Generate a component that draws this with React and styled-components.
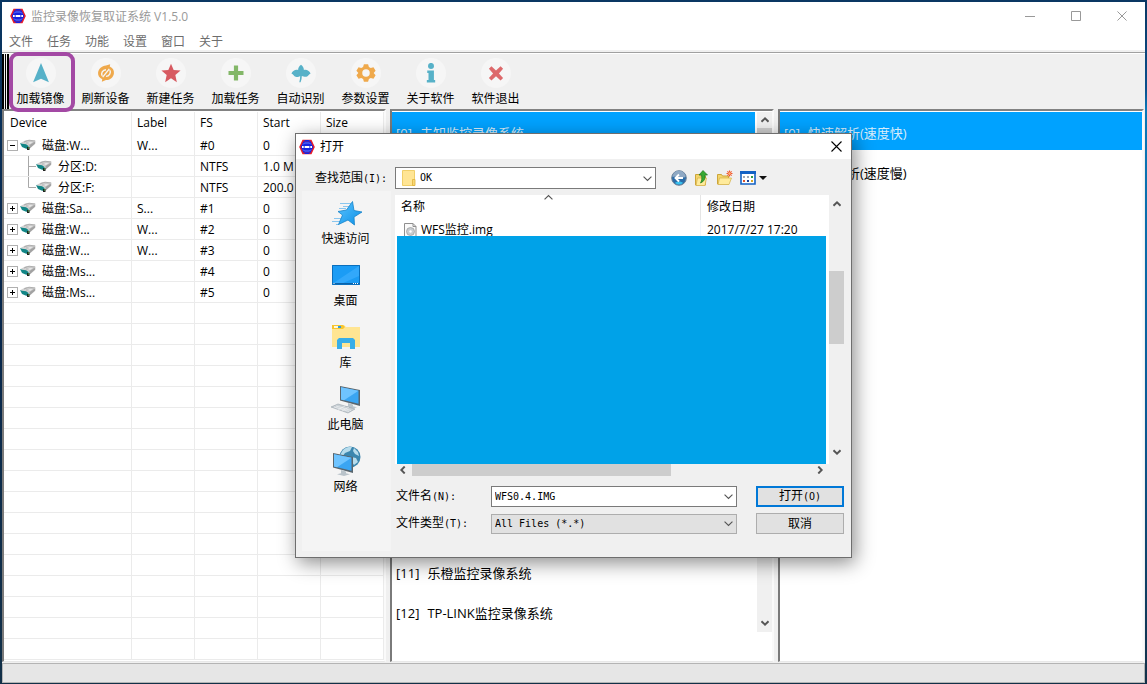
import React from "react";
import styled, { createGlobalStyle } from "styled-components";

const Global = createGlobalStyle`
  *, *::before, *::after { box-sizing: border-box; }
  body {
    margin: 0;
    font-family: "Open Sans", "Noto Sans CJK SC", sans-serif;
    font-size: 12px;
    line-height: 16px;
    color: #000;
  }
  button, input, select { font: inherit; color: inherit; margin: 0; padding: 0; border-radius: 0; }
  ul { list-style: none; margin: 0; padding: 0; }
`;

const Desktop = styled.div`
  min-height: 100vh;
  display: flex;
  padding: 2px 2px 1px;
  position: relative;
  background:
    linear-gradient(#0a3763, #0a4f8c 13%, #0a78b8 16%, #0a5a96 60%, #123048) right / 2px 100% no-repeat,
    linear-gradient(#0a3763, #06264c 40%, #123048);
`;

const Frame = styled.div`
  flex: 1;
  min-width: 0;
  display: flex;
  flex-direction: column;
  background: #f0f0f0;
`;

const TitleBar = styled.header`
  display: flex;
  align-items: center;
  height: 28px;
  padding-left: 8px;
  gap: 5px;
  background: #fff;
  color: #999;
`;

const WindowTitle = styled.h1`
  flex: 1;
  margin: 0;
  padding-top: 2px;
  font-size: 12px;
  font-weight: 400;
`;

const CaptionButtons = styled.div`
  display: flex;
`;

const CaptionButton = styled.button`
  width: 46px;
  height: 28px;
  display: grid;
  place-items: center;
  border: 0;
  background: transparent;
  color: #999;
`;

const MenuBar = styled.nav`
  display: flex;
  gap: 14px;
  height: 23px;
  padding: 4px 7px 0;
  background: #fff;
  border-bottom: 1px solid #a0a0a0;
  box-shadow: inset 0 -2px #f0f0f0;
`;

const MenuItem = styled.button`
  height: 16px;
  border: 0;
  background: transparent;
  color: #6d6d6d;
`;

const ToolBar = styled.div`
  display: flex;
  height: 56px;
  padding-left: 6px;
  border-top: 1px solid #fff;
  background: linear-gradient(90deg, #000 2px, #f0f0f0 2px 3px, #000 3px 4px, #f0f0f0 4px 5px, #000 5px 7px, #f0f0f0 7px);
`;

const Tool = styled.button`
  position: relative;
  width: 65px;
  display: flex;
  flex-direction: column;
  align-items: center;
  padding-top: 4px;
  gap: 3px;
  border: 0;
  background: transparent;
  white-space: nowrap;

  &::after {
    content: "";
    display: ${(p) => (p.$marked ? "block" : "none")};
    position: absolute;
    z-index: 2;
    inset: -2px -2px -3px 1px;
    border: 4px solid #a349a4;
    border-radius: 9px;
  }
`;

const ToolIcon = styled.span`
  width: 30px;
  height: 30px;
  display: grid;
  place-items: center;
  border-radius: 50%;
  background: #f6f6f6;
`;

const Workspace = styled.main`
  flex: 1;
  display: grid;
  grid-template-columns: 384px 384px minmax(0, 1fr);
  gap: 4px;
  padding-right: 1px;
`;

const Panel = styled.section`
  min-width: 0;
  overflow: hidden;
  padding-top: 1px;
  background: #fff;
  border-top: 2px solid #828282;
  border-left: 2px solid #7a7a7a;
  border-right: 2px solid #fafafa;
  border-bottom: 1px solid #e8e8e8;
`;

const StatusBar = styled.footer`
  height: 20px;
  margin-top: 1px;
  background: #e6e6e6;
  border: 1px solid #b4b4b4;
`;

const DeviceTable = styled.table`
  width: 380px;
  table-layout: fixed;
  border-collapse: separate;
  border-spacing: 0;

  th, td {
    padding: 0 0 0 5px;
    text-align: left;
    font-weight: 400;
    white-space: nowrap;
    overflow: hidden;
    border-right: 1px solid #ebebeb;
  }
  th { height: 23px; padding-bottom: 2px; }
  td { height: 21px; padding-top: 1px; border-bottom: 1px solid #ebebeb; }
  th:first-child { padding-left: 6px; }
  td:first-child { padding-left: 3px; padding-top: 0; }
`;

const TreeCell = styled.div`
  display: flex;
  align-items: center;
  height: 20px;
  padding-left: ${(p) => (p.$child ? 21 : 0)}px;
`;

const Expander = styled.button`
  width: 11px;
  height: 11px;
  margin-right: 2px;
  display: grid;
  place-items: center;
  border: 1px solid #b0b0b0;
  background: #fff;
`;

const DeviceName = styled.span`
  padding: 1px 0 0 6px;
`;

const ListRow = styled.div`
  display: flex;
`;

const SystemList = styled.ul`
  flex: 1;
  min-width: 0;
  font-size: 13px;
`;

const SystemItem = styled.li`
  display: flex;
  gap: 8px;
  align-items: center;
  height: 40px;
  padding: 4px 0 0 4px;
  white-space: nowrap;
  border-bottom: 2px solid #fff;
  color: ${(p) => (p.$selected ? "#d8ecfa" : "#000")};
  background: ${(p) => (p.$selected ? "#00a2ff" : "#fff")};
`;

const ListScroll = styled.div`
  width: 15px;
  margin-left: 2px;
  display: flex;
  flex-direction: column;
  align-items: center;
  justify-content: space-between;
  padding: 4px 0 5px;
  background: linear-gradient(#f0f0f0 16px, #cdcdcd 16px 60px, #f0f0f0 60px);
`;

const Dialog = styled.div`
  position: absolute;
  z-index: 5;
  top: 133px;
  left: 0;
  right: 0;
  margin: 0 auto;
  width: 557px;
  border: 1px solid #6e6e6e;
  background: #f0f0f0;
  box-shadow: 3px 5px 18px rgba(0, 0, 0, 0.45);
`;

const DialogTitle = styled.header`
  display: flex;
  align-items: center;
  gap: 5px;
  height: 25px;
  padding-left: 3px;
  background: #fff;
`;

const DialogHeading = styled.h2`
  flex: 1;
  margin: 0;
  font-size: 12px;
  font-weight: 400;
`;

const DialogClose = styled.button`
  width: 30px;
  height: 25px;
  display: grid;
  place-items: center;
  border: 0;
  background: transparent;
`;

const LookIn = styled.div`
  display: flex;
  align-items: center;
  height: 32px;
  padding: 6px 0 0 19px;
`;

const FieldLabel = styled.label`
  width: ${(p) => p.$width}px;
  white-space: nowrap;
`;

const Half = styled.span`
  font-family: "DejaVu Sans Mono", monospace;
  font-size: 10px;
`;

const Combo = styled.div`
  position: relative;
  width: ${(p) => p.$width}px;
  height: ${(p) => p.$height}px;

  select, input {
    display: block;
    width: 100%;
    height: 100%;
    appearance: none;
    outline: 0;
    padding-left: ${(p) => (p.$icon ? 24 : 3)}px;
    border: 1px solid ${(p) => (p.$grey ? "#adadad" : "#7a7a7a")};
    background: ${(p) => (p.$grey ? "#e1e1e1" : "#fff")};
    font-family: "DejaVu Sans Mono", monospace;
    font-size: 10px;
  }
`;

const ComboArrow = styled.span`
  position: absolute;
  right: 4px;
  top: 0;
  bottom: 0;
  display: flex;
  align-items: center;
  pointer-events: none;
`;

const ComboIcon = styled.span`
  position: absolute;
  left: 7px;
  top: 0;
  bottom: 0;
  display: flex;
  align-items: center;
  pointer-events: none;
`;

const NavTools = styled.div`
  display: flex;
  align-items: center;
  gap: 7px;
  padding-left: 15px;
`;

const NavButton = styled.button`
  display: flex;
  align-items: center;
  gap: 3px;
  height: 16px;
  border: 0;
  background: transparent;
`;

const DialogBody = styled.div`
  display: flex;
  padding: 0 7px 6px 6px;
`;

const Places = styled.nav`
  width: 89px;
  display: flex;
  flex-direction: column;
  align-items: center;
  padding-top: 6px;
  background: #f4f4f4;
`;

const Place = styled.button`
  display: flex;
  flex-direction: column;
  align-items: center;
  gap: 2px;
  width: 89px;
  height: 62px;
  padding-right: 2px;
  border: 0;
  background: transparent;
`;

const Browser = styled.div`
  flex: 1;
  min-width: 0;
  padding: 4px 0 17px 4px;
`;

const BrowserRow = styled.div`
  display: flex;
`;

const FilePane = styled.div`
  position: relative;
  width: 434px;
  background: #fff;
`;

const SortMark = styled.span`
  position: absolute;
  left: 149px;
  top: -2px;
  display: flex;
`;

const FileTable = styled.table`
  width: 100%;
  table-layout: fixed;
  border-collapse: separate;
  border-spacing: 0;

  th, td {
    padding: 0 0 0 6px;
    font-weight: 400;
    text-align: left;
    white-space: nowrap;
  }
  th { height: 25px; padding-bottom: 2px; }
  td { height: 16px; padding-top: 3px; line-height: 13px; }
  th:first-child { border-right: 1px solid #e5e5e5; }
  td:first-child { border-right: 1px solid #f0f5fc; }
`;

const FileName = styled.span`
  display: flex;
  gap: 4px;
  height: 13px;
  padding-left: 3px;
`;

const RedactedArea = styled.div`
  position: relative;
  height: 228px;
  margin: 0 3px 0 2px;
  background: #00a2e8;
`;

const VerticalScroll = styled.div`
  width: 15px;
  display: flex;
  flex-direction: column;
  align-items: center;
  padding: 5px 0 8px;
`;

const VerticalThumb = styled.div`
  width: 15px;
  height: 73px;
  margin: 63px 0 auto;
  background: #cdcdcd;
`;

const HorizontalScroll = styled.div`
  display: flex;
  align-items: center;
  width: 434px;
  height: 12px;
  padding: 0 5px 0 4px;
`;

const HorizontalThumb = styled.div`
  width: 259px;
  height: 12px;
  margin: 0 auto 0 5px;
  background: #cdcdcd;
`;

const Fields = styled.form`
  display: grid;
  grid-template-columns: 342px 88px;
  justify-content: space-between;
  row-gap: 6px;
  padding: 10px 0 0 1px;
`;

const Field = styled.div`
  display: flex;
  align-items: center;
`;

const PushButton = styled.button`
  height: 21px;
  background: #e1e1e1;
  border: ${(p) => (p.$primary ? "2px solid #0078d7" : "1px solid #adadad")};
  line-height: 16px;
`;

const AppIcon = () => (
  <svg width="16" height="16" viewBox="0 0 16 16">
    <path d="M4 1.500h8L15 8l-3 6.500H4L1 8z" fill="#1424e0" stroke="#e81c28" strokeWidth="1.500" />
    <path d="M5.500 1.500h5M5.500 14.500h5" stroke="#1424e0" strokeWidth="1" />
    <path d="M4 5.500l1.500-1.500h5L12 5.500M4 10.500L5.500 12h5l1.500-1.500" fill="none" stroke="#7f92ff" strokeWidth="0.800" />
    <path d="M3 7h1.500v2H3zM6 7h4v2H6zM11.500 7H13v2h-1.500z" fill="#fff" />
    <path d="M3 8h10" stroke="#fff" strokeWidth="0.800" />
  </svg>
);

const Chevron = ({ dir = "down", thick, wide }) => {
  const turn = { down: 0, up: 180, left: 90, right: -90 }[dir];
  const s = wide ? 9 : 8;
  return (
    <svg width={s} height={s} viewBox="0 0 8 8">
      <path d="M0.500 2.300L4 5.700l3.500-3.400" transform={`rotate(${turn} 4 4)`} fill="none" stroke="#555" strokeWidth={thick ? 1.9 : 1} />
    </svg>
  );
};

const Cross = ({ size = 11, color }) => (
  <svg width={size} height={size} viewBox="0 0 11 11">
    <path d="M0.500 0.500l10 10M10.500 0.500l-10 10" stroke={color} strokeWidth="1.100" />
  </svg>
);

const Disk = () => (
  <svg width="16" height="12" viewBox="0 0 16 12">
    <path d="M0.500 4L6 1l9.500.5v3L10 9.500 8 11z" fill="#d2d2d2" />
    <path d="M4 3l5-1.800 6 .8" fill="none" stroke="#a8a8a8" strokeWidth="0.900" />
    <path d="M6 4l4-1.200 4 .4-4 2z" fill="#f4f4f4" stroke="#b2b2b2" strokeWidth="0.600" />
    <path d="M9.500 6l5.500-3.200v2L9.500 9.500z" fill="#a2a2a2" />
    <path d="M0 4l2 .7 4 .6 2.500 1.700v3L5.500 9.500 2 8z" fill="#128686" />
    <path d="M7 8h2.500v3H7z" fill="#222" />
    <path d="M8 8.500h1v1H8z" fill="#4be04b" />
  </svg>
);

const Branch = ({ last }) => (
  <svg width="8" height="21" viewBox="0 0 8 21">
    <path d={last ? "M0.500 0v10.500H8" : "M0.500 0v21M0.500 10.500H8"} fill="none" stroke="#a8a8a8" />
  </svg>
);

const gear = "M9.500 1.500h5l1 3.200 2.200 1.200 3.300-.8 2.500 4.300-2.300 2.600 2.300 2.600-2.500 4.300-3.300-.8-2.200 1.200-1 3.200h-5l-1-3.200-2.200-1.200-3.300.8L.500 14.600 2.800 12 .500 9.400 3 5.100l3.300.8 2.200-1.200z";

const toolIcons = {
  load: <path d="M12 0L21.500 23 12 19 2.500 23z" fill="#57b1c8" />,
  refresh: (
    <>
      <path d="M12 3l5-1.500-.5 2.800C20 6 22 9 21.500 12.500 21 17 17 20.500 12 20.500L7 22.500l.5-3C4 18 2 15 2.500 11.500 3 7 7 3.500 12 3z" fill="#efa94c" />
      <path d="M7.500 15.500c-2-3 .5-7.500 4.500-7.500M16.500 8.500c2 3-.5 7.500-4.500 7.500M8 17l8-10" fill="none" stroke="#f6f6f6" strokeWidth="1.700" />
    </>
  ),
  star: <path d="M12 1l3.200 7.500 8.300.6-6.300 5.400L19 23l-7-4.600L5 23l1.800-8.500L.5 9.100l8.300-.6z" fill="#d75a61" />,
  plus: <path d="M9.500 3h5v6.500H21v5h-6.500V21h-5v-6.500H3v-5h6.500z" fill="#83b768" />,
  leaf: <path d="M12 2c2 1.500 3.500 3.500 3.500 6.500 3-1 6 .5 8 4-2 1-3 3.500-5 4-2 .5-4-.5-5.500-1 0 2.500-.5 5-1.500 7.500h-1.500c.500-2.500 1-5 1-7.500-2 1.500-3.500 1.500-5.500 1S3 13.500.500 12.500c2-3.500 5-5 8-4C8.500 5.500 10 3.500 12 2z" fill="#57b1c8" />,
  gear: (
    <>
      <path d={gear} fill="#efa94c" />
      <circle cx="12" cy="12" r="4.500" fill="#f6f6f6" />
    </>
  ),
  info: (
    <g fill="#57b1c8">
      <circle cx="12" cy="3.500" r="3.600" />
      <path d="M7.500 9h8v11.500h1.500v3H7v-3h2V12H7.500z" />
    </g>
  ),
  exit: <path d="M6.500 4L12 9l5.500-5L20.500 7l-5 5.500 5 5.500-3 3L12 16l-5.500 5-3-3 5-5.500-5-5.500z" fill="#dd696b" />,
};

const tools = [
  ["load", "加载镜像"],
  ["refresh", "刷新设备"],
  ["star", "新建任务"],
  ["plus", "加载任务"],
  ["leaf", "自动识别"],
  ["gear", "参数设置"],
  ["info", "关于软件"],
  ["exit", "软件退出"],
];

const devices = [
  { name: "磁盘:W...", label: "W...", fs: "#0", start: "0", open: true },
  { name: "分区:D:", fs: "NTFS", start: "1.0 M", child: true },
  { name: "分区:F:", fs: "NTFS", start: "200.0", child: true, last: true },
  { name: "磁盘:Sa...", label: "S...", fs: "#1", start: "0" },
  { name: "磁盘:W...", label: "W...", fs: "#2", start: "0" },
  { name: "磁盘:W...", label: "W...", fs: "#3", start: "0" },
  { name: "磁盘:Ms...", fs: "#4", start: "0" },
  { name: "磁盘:Ms...", fs: "#5", start: "0" },
];
const emptyRows = Array.from({ length: 17 }, (_, i) => i);

const systems = Array.from({ length: 13 }, () => "");
systems[0] = "未知监控录像系统";
systems[11] = "乐橙监控录像系统";
systems[12] = "TP-LINK监控录像系统";

const Monitor = ({ x = 0, y = 0 }) => (
  <g transform={`translate(${x} ${y})`}>
    <path d="M0 0l20 4v16L0 14.500z" fill="#59656d" />
    <path d="M1 1.200l17.500 3.600v13L1 13.500z" fill="#3aa5f2" />
    <path d="M1 1.200l17.500 3.600L4 14.200 1 13.500z" fill="#6fc4ff" />
    <path d="M8 17l5 1.400v1.800l4 1-6 1.800-7-1.700 4-1z" fill="#b9c3ca" />
  </g>
);

const placeIcons = {
  quick: (
    <svg width="32" height="32" viewBox="0 0 32 32">
      <defs>
        <linearGradient id="starFill" x1="0" y1="0" x2="1" y2="1">
          <stop offset="0" stopColor="#5cc4ff" />
          <stop offset="1" stopColor="#0a8fe6" />
        </linearGradient>
      </defs>
      <path d="M10 6.500h11M13 9.500h7M9 11.500h7M4 21.500h8M2 24.500h8M6 27.500h3" stroke="#8ac6ee" strokeWidth="1" />
      <path d="M22.500 4.500l1.500 9 8 1.500-8 5 .5 8-6.500-5-9.500 4.500 4-9.500L8 14.500l8.500-1.500z" fill="url(#starFill)" stroke="#1583c9" strokeWidth="0.800" />
    </svg>
  ),
  desktop: (
    <svg width="32" height="32" viewBox="0 0 32 32">
      <path d="M2 6h28v20H2z" fill="#1b9cf5" />
      <path d="M29 7v10L12 24.500 2 25z" fill="#42b1ff" opacity="0.600" />
      <path d="M2.500 6.500h27v19h-27z" fill="none" stroke="#0a6fbd" />
      <path d="M3 24.500h26" stroke="#0b62a8" />
      <path d="M3.500 24.500h1M23 24.500h1M25 24.500h1M27 24.500h1" stroke="#fff" />
    </svg>
  ),
  library: (
    <svg width="32" height="32" viewBox="0 0 32 32">
      <path d="M2 4h12l2 2h14v20H2z" fill="#ffe592" />
      <path d="M2 4h11l2 2-2 2H2z" fill="#f7c52e" />
      <path d="M4 5h7v2H4z" fill="#fff8dc" />
      <path d="M8 5h3v2H8z" fill="#2b9fe0" />
      <path d="M9 17h14l2 2v9h-5v-6h-8v6H7v-9z" fill="#38aee8" />
    </svg>
  ),
  computer: (
    <svg width="32" height="32" viewBox="0 0 32 32">
      <Monitor x={10} y={3} />
      <path d="M1 24l7-3 17 5-7 4z" fill="#c9d0d5" stroke="#98a3ab" strokeWidth="0.600" />
      <path d="M4 24l15 4.500M6 23l15 4.500M8 27l7-4M12 28l7-4" stroke="#fff" strokeWidth="0.500" />
    </svg>
  ),
  network: (
    <svg width="32" height="32" viewBox="0 0 32 32">
      <circle cx="20" cy="12" r="10.500" fill="#3b86ae" />
      <path d="M13 5c3-3 7-3.500 9-3l-2 4-5 2-3 4-2-2zM24 3l4 4 1 4-4-2-2-3zM21 12l5 1 2 4-4 3-3-4z" fill="#b7dcec" />
      <Monitor x={3} y={8} />
    </svg>
  ),
};

const places = [
  ["quick", "快速访问"],
  ["desktop", "桌面"],
  ["library", "库"],
  ["computer", "此电脑"],
  ["network", "网络"],
];

const BackIcon = () => (
  <svg width="16" height="16" viewBox="0 0 16 16">
    <circle cx="8" cy="8" r="7.300" fill="#2b6ca8" stroke="#6e8296" />
    <path d="M1.500 7a6.500 6.500 0 0 1 13 0C10 9 6 5 1.500 7z" fill="#8fa9c4" />
    <path d="M4 13a6.500 6.500 0 0 0 8 0c-2-2-6-2-8 0z" fill="#39c2ef" />
    <path d="M8 4.500L4.500 8 8 11.500M4.500 8H12" fill="none" stroke="#fff" strokeWidth="1.900" />
  </svg>
);

const UpIcon = () => (
  <svg width="16" height="16" viewBox="0 0 16 16">
    <path d="M1.500 4.500h4l1 1.500h5v9h-10z" fill="#f3d56c" stroke="#cda53a" />
    <path d="M3.500 8h9l-1.500 7.500h-9z" fill="#ffeb9c" stroke="#d4b046" strokeWidth="0.700" />
    <path d="M9 0.500l4.500 4.500h-2.500c.5 4-1 6.500-4.500 8C8 10.500 8 8 7.500 5H5z" fill="#38a832" stroke="#1c7a1c" strokeWidth="0.700" />
  </svg>
);

const NewFolderIcon = () => (
  <svg width="16" height="16" viewBox="0 0 16 16">
    <path d="M0.500 4.500h4l1 1.500h6v8h-11z" fill="#f3d56c" stroke="#cda53a" />
    <path d="M2.500 8h12L12 14.500H1z" fill="#ffeb9c" stroke="#d4b046" strokeWidth="0.700" />
    <path d="M12.500 0.500v6M9.500 3.500h6M10.400 1.400l4.200 4.200M14.600 1.400l-4.200 4.200" stroke="#f0562e" strokeWidth="1.100" />
    <circle cx="12.500" cy="3.500" r="1.200" fill="#ffb37a" />
  </svg>
);

const ViewIcon = () => (
  <svg width="16" height="14" viewBox="0 0 16 14">
    <path d="M1 1h14v12H1z" fill="#fff" stroke="#1362c4" strokeWidth="1.600" />
    <path d="M0 0h16v3H0z" fill="#1362c4" />
    <path d="M3 5h2v2H3zM7 5h2v2H7z" fill="#9fa8b4" />
    <path d="M11 5h2v2h-2z" fill="#2f9a46" />
    <path d="M3 9h2v2H3z" fill="#e0562c" />
    <path d="M7 9h2v2H7z" fill="#1b3f94" />
    <path d="M11 9h2v2h-2z" fill="#d8a72a" />
  </svg>
);

const FolderIcon = () => (
  <svg width="14" height="16" viewBox="0 0 14 16">
    <path d="M0.500 0.500h12v15h-12z" fill="#ffe594" stroke="#f0cf69" />
    <path d="M10.500 9.500h2.500v6h-2.500z" fill="#f8d775" stroke="#dfb33a" strokeWidth="0.800" />
  </svg>
);

const ImgFileIcon = () => (
  <svg width="13" height="16" viewBox="0 0 13 16">
    <path d="M0.500 0.500h8.500l3 3v12h-11.500z" fill="#fafafa" stroke="#8f8f8f" />
    <path d="M9 0.500v3h3" fill="none" stroke="#8f8f8f" />
    <circle cx="6.500" cy="8.500" r="4" fill="#c8ccd0" stroke="#999" strokeWidth="0.700" />
    <circle cx="6.500" cy="8.500" r="1.200" fill="#fff" />
  </svg>
);

function OpenDialog() {
  return (
    <Dialog role="dialog" aria-labelledby="dialog-title">
      <DialogTitle>
        <AppIcon />
        <DialogHeading id="dialog-title">打开</DialogHeading>
        <DialogClose aria-label="关闭"><Cross color="#000" /></DialogClose>
      </DialogTitle>
      <LookIn>
        <FieldLabel $width={80} htmlFor="look-in">查找范围<Half>(I):</Half></FieldLabel>
        <Combo $width={261} $height={22} $icon>
          <select id="look-in"><option>OK</option></select>
          <ComboIcon><FolderIcon /></ComboIcon>
          <ComboArrow><Chevron wide /></ComboArrow>
        </Combo>
        <NavTools>
          <NavButton aria-label="后退"><BackIcon /></NavButton>
          <NavButton aria-label="向上"><UpIcon /></NavButton>
          <NavButton aria-label="新建文件夹"><NewFolderIcon /></NavButton>
          <NavButton aria-label="查看">
            <ViewIcon />
            <svg width="8" height="4" viewBox="0 0 8 4"><path d="M0 0h8L4 4z" fill="#111" /></svg>
          </NavButton>
        </NavTools>
      </LookIn>
      <DialogBody>
        <Places>
          {places.map(([icon, name]) => (
            <Place key={icon}>{placeIcons[icon]}{name}</Place>
          ))}
        </Places>
        <Browser>
          <BrowserRow>
            <FilePane>
              <SortMark><Chevron dir="up" wide /></SortMark>
              <FileTable>
                <colgroup><col style={{ width: 306 }} /><col /></colgroup>
                <thead><tr><th>名称</th><th>修改日期</th></tr></thead>
                <tbody>
                  <tr>
                    <td><FileName><ImgFileIcon />WFS监控.img</FileName></td>
                    <td>2017/7/27 17:20</td>
                  </tr>
                </tbody>
              </FileTable>
              <RedactedArea />
            </FilePane>
            <VerticalScroll>
              <Chevron dir="up" thick />
              <VerticalThumb />
              <Chevron thick />
            </VerticalScroll>
          </BrowserRow>
          <HorizontalScroll>
            <Chevron dir="left" thick />
            <HorizontalThumb />
            <Chevron dir="right" thick />
          </HorizontalScroll>
          <Fields onSubmit={(e) => e.preventDefault()}>
            <Field>
              <FieldLabel $width={95} htmlFor="file-name">文件名<Half>(N):</Half></FieldLabel>
              <Combo $width={246} $height={21}>
                <input id="file-name" defaultValue="WFS0.4.IMG" />
                <ComboArrow><Chevron wide /></ComboArrow>
              </Combo>
            </Field>
            <PushButton $primary>打开<Half>(O)</Half></PushButton>
            <Field>
              <FieldLabel $width={95} htmlFor="file-type">文件类型<Half>(T):</Half></FieldLabel>
              <Combo $width={246} $height={20} $grey>
                <select id="file-type"><option>All Files (*.*)</option></select>
                <ComboArrow><Chevron wide /></ComboArrow>
              </Combo>
            </Field>
            <PushButton type="button">取消</PushButton>
          </Fields>
        </Browser>
      </DialogBody>
    </Dialog>
  );
}

export default function App() {
  return (
    <Desktop>
      <Global />
      <Frame>
        <TitleBar>
          <AppIcon />
          <WindowTitle>监控录像恢复取证系统 V1.5.0</WindowTitle>
          <CaptionButtons>
            <CaptionButton aria-label="最小化">
              <svg width="10" height="1"><path d="M0 0.500h10" stroke="#999" /></svg>
            </CaptionButton>
            <CaptionButton aria-label="最大化">
              <svg width="10" height="10"><path d="M0.500 0.500h9v9h-9z" fill="none" stroke="#999" /></svg>
            </CaptionButton>
            <CaptionButton aria-label="关闭"><Cross size={10} color="#999" /></CaptionButton>
          </CaptionButtons>
        </TitleBar>
        <MenuBar>
          {["文件", "任务", "功能", "设置", "窗口", "关于"].map((m) => <MenuItem key={m}>{m}</MenuItem>)}
        </MenuBar>
        <ToolBar>
          {tools.map(([icon, name], i) => (
            <Tool key={icon} $marked={i === 0}>
              <ToolIcon><svg width="20" height="20" viewBox="0 0 24 24">{toolIcons[icon]}</svg></ToolIcon>
              {name}
            </Tool>
          ))}
        </ToolBar>
        <Workspace>
          <Panel>
            <DeviceTable>
              <colgroup>
                <col style={{ width: 128 }} />
                <col /><col /><col /><col />
              </colgroup>
              <thead>
                <tr>{["Device", "Label", "FS", "Start", "Size"].map((h) => <th key={h}>{h}</th>)}</tr>
              </thead>
              <tbody>
                {devices.map((d, i) => (
                  <tr key={i}>
                    <td>
                      <TreeCell $child={d.child}>
                        {d.child ? <Branch last={d.last} /> : (
                          <Expander aria-label={d.open ? "折叠" : "展开"}>
                            <svg width="5" height="5">
                              <path d={d.open ? "M0 2.500h5" : "M0 2.500h5M2.500 0v5"} stroke="#000" />
                            </svg>
                          </Expander>
                        )}
                        <Disk />
                        <DeviceName>{d.name}</DeviceName>
                      </TreeCell>
                    </td>
                    <td>{d.label}</td>
                    <td>{d.fs}</td>
                    <td>{d.start}</td>
                    <td />
                  </tr>
                ))}
                {emptyRows.map((r) => <tr key={r}><td /><td /><td /><td /><td /></tr>)}
              </tbody>
            </DeviceTable>
          </Panel>
          <Panel>
            <ListRow>
              <SystemList>
                {systems.map((s, i) => (
                  <SystemItem key={i} $selected={i === 0}>
                    {s && <><span>[{i}]</span><span>{s}</span></>}
                  </SystemItem>
                ))}
              </SystemList>
              <ListScroll>
                <Chevron dir="up" thick />
                <Chevron thick />
              </ListScroll>
            </ListRow>
          </Panel>
          <Panel>
            <SystemList>
              <SystemItem $selected><span>[0]</span><span>快速解析(速度快)</span></SystemItem>
              <SystemItem><span>[1]</span><span>完整解析(速度慢)</span></SystemItem>
            </SystemList>
          </Panel>
        </Workspace>
        <StatusBar />
      </Frame>
      <OpenDialog />
    </Desktop>
  );
}
